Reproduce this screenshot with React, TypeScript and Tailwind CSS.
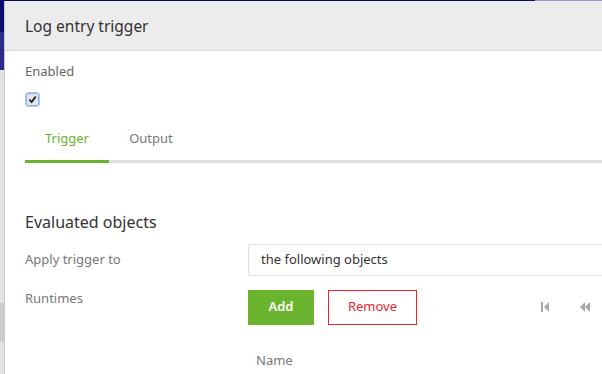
import React from "react";

export default function App() {
  return (
    <div className="relative w-[602px] h-[374px] overflow-hidden bg-[#e2e2e2]" style={{ fontFamily: '"Noto Sans", "Open Sans", sans-serif' }}>
      {/* background strip on the left */}
      <div className="absolute left-0 top-0 w-[4px] h-[32px] bg-[#0c0c6c]" />
      <div className="absolute left-0 top-[32px] w-[4px] h-[38px] bg-[#2b2b8a]" />
      <div className="absolute left-0 top-[303px] w-[4px] h-[38px] bg-[#cbcbcb]" />
      <div className="absolute left-0 top-0 w-[602px] h-[1px] bg-[#0c0c6c]" />
      <div className="absolute left-[535px] top-0 w-[67px] h-[1px] bg-[#9a9ac4]" />
      {/* dialog */}
      <div className="absolute left-[4px] top-[1px] w-[620px] h-[400px] bg-white border-l border-[#c8c8c8] flex flex-col">
        <div className="h-[50px] bg-[#ececec] border-b border-[#dadada] flex items-center pl-[20px] pt-[3px] text-[15.5px] text-[#333]">
          Log entry trigger
        </div>
        <div className="pl-[20px] pt-[11px] text-[13px] text-[#666] leading-[18px]">Enabled</div>
        <div className="pl-[21px] pt-[13px]">
          <div className="w-[13px] h-[13px] rounded-[2px] border border-[#8fb4ef] bg-[#e6e6e6] outline outline-1 outline-[#a8c6f5] flex items-center justify-center">
            <svg width="9" height="9" viewBox="0 0 10 10"><path d="M1.5 5.2 L4 7.8 L8.5 1.8" fill="none" stroke="#222" strokeWidth="2" /></svg>
          </div>
        </div>
        <div className="ml-[20px] mt-[22px] flex border-b-[3px] border-[#e0e0e0]">
          <div className="relative w-[84px] text-center text-[13px] text-[#6ab42e] pb-[11px] pt-[1px]">
            Trigger
            <div className="absolute left-0 right-0 bottom-[-3px] h-[3px] bg-[#6ab42e]" />
          </div>
          <div className="w-[84px] text-center text-[13px] text-[#777] pb-[11px] pt-[1px]">Output</div>
        </div>
        <div className="pl-[20px] mt-[48px] text-[16px] text-[#333] leading-[22px]">Evaluated objects</div>
        <div className="flex items-center mt-[11px] h-[32px]">
          <div className="w-[243px] pl-[20px] text-[13px] text-[#777]">Apply trigger to</div>
          <div className="flex-1 h-[32px] border border-[#dddddd] rounded-[3px] flex items-center pl-[12px] text-[13px] text-[#333]">
            the following objects
          </div>
        </div>
        <div className="flex mt-[14px]">
          <div className="w-[243px] pl-[20px] text-[13px] text-[#777] leading-[16px] pt-[0px]">Runtimes</div>
          <div className="flex items-center">
            <div className="w-[66px] h-[35px] bg-[#6ab42e] text-white text-[13px] font-semibold flex items-center justify-center">Add</div>
            <div className="ml-[14px] w-[89px] h-[35px] border border-[#e8262a] text-[#e8262a] text-[13px] flex items-center justify-center">Remove</div>
            <div className="ml-[124px] flex items-center text-[#aaa]">
              <svg width="9" height="10" viewBox="0 0 9 10"><rect x="0" y="0" width="2" height="10" fill="#a8a8a8" /><path d="M8 0 L3 5 L8 10 Z" fill="#a8a8a8" /></svg>
              <svg className="ml-[29px]" width="12" height="10" viewBox="0 0 12 10"><path d="M6 0 L1 5 L6 10 Z" fill="#a8a8a8" /><path d="M11 0 L6 5 L11 10 Z" fill="#a8a8a8" /></svg>
            </div>
          </div>
        </div>
        <div className="pl-[251px] mt-[26px] text-[13px] text-[#777]">Name</div>
      </div>
    </div>
  );
}
